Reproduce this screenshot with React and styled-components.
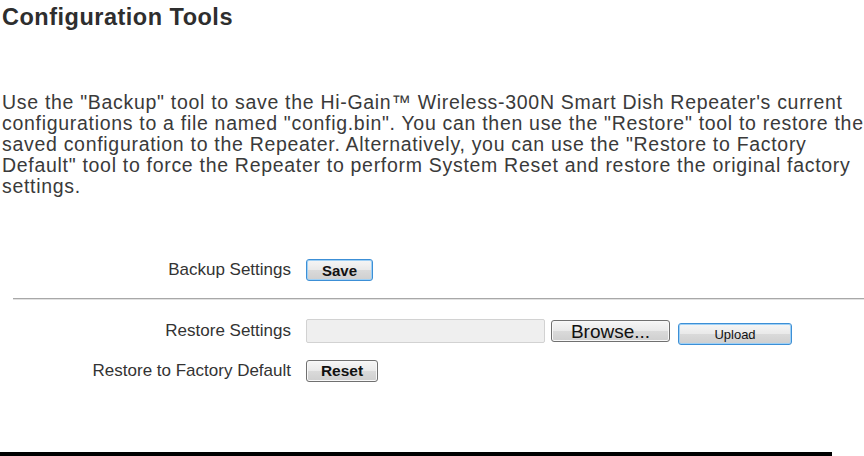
import React from "react";
import styled, { createGlobalStyle } from "styled-components";

const GlobalStyle = createGlobalStyle`
  html, body {
    margin: 0;
    padding: 0;
    background: #ffffff;
  }
  body {
    font-family: "Liberation Sans", Arial, sans-serif;
    color: #333333;
    width: 864px;
    height: 456px;
    overflow: hidden;
  }
`;

const Page = styled.div`
  width: 864px;
  height: 456px;
  display: flex;
  flex-direction: column;
`;

const Title = styled.h2`
  margin: 3px 0 0 2px;
  font-size: 23.5px;
  line-height: 28px;
  letter-spacing: 0.5px;
  font-weight: bold;
  color: #2e2e2e;
`;

const Intro = styled.p`
  margin: 61px 0 0 2px;
  font-size: 19.5px;
  line-height: 21px;
  letter-spacing: 0.7px;
  white-space: nowrap;
  color: #3a3a3a;
`;

const Form = styled.div`
  margin-top: 61px;
  display: flex;
  flex-direction: column;
`;

const Row = styled.div`
  display: grid;
  grid-template-columns: 291px 1fr;
  column-gap: 15px;
  align-items: center;
  height: ${(p) => p.h}px;
  margin-top: ${(p) => p.mt || 0}px;
`;

const Label = styled.span`
  text-align: right;
  font-size: 17px;
  color: #333333;
`;

const Controls = styled.div`
  display: flex;
  align-items: center;
`;

const Divider = styled.hr`
  margin: 16px 0 16px 13px;
  border: none;
  border-top: 1px solid #a8a8a8;
  border-bottom: 1px solid #e2e2e2;
  height: 0;
`;

const Button = styled.button`
  font-family: "Liberation Sans", Arial, sans-serif;
  font-size: ${(p) => p.fs || 15}px;
  font-weight: ${(p) => (p.bold ? "bold" : "normal")};
  color: #111111;
  width: ${(p) => p.w}px;
  height: 22px;
  padding: 0;
  margin-left: ${(p) => p.ml || 0}px;
  margin-top: ${(p) => p.mt || 0}px;
  border-radius: 3px;
  border: 1px solid ${(p) => (p.focus ? "#3c8fd6" : "#707070")};
  box-shadow: ${(p) => (p.focus ? "inset 0 0 0 1px #9fd0f5" : "inset 0 0 0 1px #f8f8f8")};
  background: linear-gradient(#f6f6f6 0%, #e9e9e9 50%, #dadada 51%, #cfcfcf 100%);
  cursor: pointer;
`;

const FileBox = styled.div`
  width: 237px;
  height: 22px;
  background: #efefef;
  border: 1px solid #d2d2d2;
  border-radius: 2px;
`;

const BottomBar = styled.div`
  margin-top: auto;
  width: 832px;
  height: 4px;
  background: #000000;
`;

export default function App() {
  return (
    <Page>
      <GlobalStyle />
      <Title>Configuration Tools</Title>
      <Intro>
        Use the "Backup" tool to save the Hi-Gain™ Wireless-300N Smart Dish
        Repeater's current
        <br />
        configurations to a file named "config.bin". You can then use the
        "Restore" tool to restore the
        <br />
        saved configuration to the Repeater. Alternatively, you can use the
        "Restore to Factory
        <br />
        Default" tool to force the Repeater to perform System Reset and restore
        the original factory
        <br />
        settings.
      </Intro>
      <Form>
        <Row h={24}>
          <Label>Backup Settings</Label>
          <Controls>
            <Button w={67} focus bold>
              Save
            </Button>
          </Controls>
        </Row>
        <Divider />
        <Row h={24}>
          <Label>Restore Settings</Label>
          <Controls>
            <FileBox />
            <Button w={119} fs={19} ml={6}>
              Browse...
            </Button>
            <Button w={114} fs={13} ml={8} mt={7} focus>
              Upload
            </Button>
          </Controls>
        </Row>
        <Row h={22} mt={20}>
          <Label>Restore to Factory Default</Label>
          <Controls>
            <Button w={72} fs={15.5} bold>
              Reset
            </Button>
          </Controls>
        </Row>
      </Form>
      <BottomBar />
    </Page>
  );
}
